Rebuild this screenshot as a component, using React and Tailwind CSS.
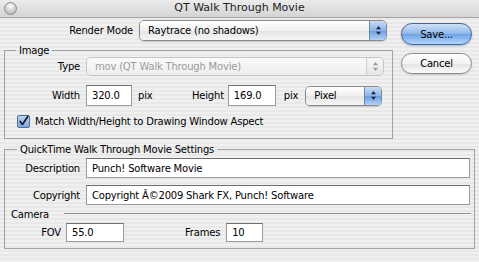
import React from 'react';

const Arrows = ({ disabled }) => (
    <svg width="7" height="11" viewBox="0 0 7 11">
        <path d="M3.5 1 L6 4.2 L1 4.2 Z" fill={disabled ? '#9a9a9a' : '#1c2b44'} />
        <path d="M3.5 10 L6 6.8 L1 6.8 Z" fill={disabled ? '#9a9a9a' : '#1c2b44'} />
    </svg>
);

const Popup = ({ label, className, disabled }) => (
    <div className={`flex items-stretch rounded-[5px] border overflow-hidden ${disabled ? 'border-[#c4c4c4]' : 'border-[#8a8a8a] shadow-[0_1px_1px_rgba(0,0,0,0.15)]'} ${className}`}>
        <div className={`flex-1 flex items-center pl-[8px] ${disabled ? 'bg-[linear-gradient(#fafafa,#eeeeee)] text-[#9c9c9c]' : 'bg-[linear-gradient(#ffffff,#f0f0f0_50%,#e4e4e4_51%,#f6f6f6)] text-black'}`}>
            {label}
        </div>
        <div className={`w-[17px] flex items-center justify-center border-l ${disabled ? 'border-[#d0d0d0] bg-[linear-gradient(#f6f6f6,#e6e6e6)]' : 'border-[#5f86c4] bg-[linear-gradient(#c9dcf6,#8db3ea_50%,#6a9be0_51%,#b6d2f6)]'}`}>
            <Arrows disabled={disabled} />
        </div>
    </div>
);

const Field = ({ value, className }) => (
    <div className={`bg-white border border-[#9a9a9a] border-t-[#6e6e6e] flex items-center pl-[5px] text-black ${className}`}>
        {value}
    </div>
);

export default function App() {
    return (
        <div className="w-[479px] h-[262px] overflow-hidden text-[10px] text-black font-['DejaVu_Sans',sans-serif] bg-[repeating-linear-gradient(180deg,#f0f0f0_0px,#f0f0f0_2px,#e8e8e8_2px,#e8e8e8_4px)]">
            {/* Title bar */}
            <div className="relative h-[18px] flex items-center justify-center border-b border-[#a6a6a6] bg-[linear-gradient(#ececec,#d4d4d4)]">
                <div className="absolute left-[4px] top-[2px] w-[13px] h-[13px] rounded-full border border-[#8c8c8c] bg-[radial-gradient(circle_at_50%_30%,#ffffff,#c9c9c9_60%,#a9a9a9)]" />
                <span className="text-[11px] text-[#202020]">QT Walk Through Movie</span>
            </div>

            <div className="tracking-[-0.2px]">
                <div className="flex">
                    <div className="w-[395px]">
                        {/* Render mode */}
                        <div className="flex items-center mt-[2px] h-[21px]">
                            <div className="w-[134px] text-right pr-[1px]">Render Mode</div>
                            <Popup label="Raytrace (no shadows)" className="ml-[5px] w-[248px] h-[21px]" />
                        </div>

                        {/* Image group */}
                        <fieldset className="ml-[4px] mt-[4px] w-[389px] h-[94px] border border-[#a3a3a3]">
                            <legend className="ml-[11px] px-[3px] leading-[11px]">Image</legend>
                            <div className="flex items-center mt-[1px] h-[19px]">
                                <div className="w-[75px] text-right">Type</div>
                                <Popup label="mov (QT Walk Through Movie)" disabled className="ml-[6px] w-[298px] h-[19px]" />
                            </div>
                            <div className="flex items-center mt-[9px] h-[21px]">
                                <div className="w-[75px] text-right">Width</div>
                                <Field value="320.0" className="ml-[6px] w-[46px] h-[21px]" />
                                <div className="ml-[6px] w-[54px]">pix</div>
                                <div>Height</div>
                                <Field value="169.0" className="ml-[4px] w-[48px] h-[21px]" />
                                <div className="ml-[8px]">pix</div>
                                <Popup label="Pixel" className="ml-[7px] w-[77px] h-[20px]" />
                            </div>
                            <div className="flex items-center mt-[8px] h-[14px] pl-[12px]">
                                <div className="w-[13px] h-[13px] rounded-[2px] border border-[#4f6f9f] bg-[linear-gradient(#bcd2f0,#7fa6dc)] flex items-center justify-center">
                                    <svg width="13" height="13" viewBox="0 0 13 13">
                                        <path d="M2.5 6.5 L5.2 10 L11.5 0.5" fill="none" stroke="#0d1a33" strokeWidth="2" strokeLinecap="round" strokeLinejoin="round" />
                                    </svg>
                                </div>
                                <span className="ml-[5px]">Match Width/Height to Drawing Window Aspect</span>
                            </div>
                        </fieldset>
                    </div>

                    {/* Buttons */}
                    <div className="ml-[6px] flex flex-col">
                        <div className="mt-[5px] w-[71px] h-[22px] rounded-full border border-[#44679f] bg-[linear-gradient(#cfe1f8,#8fb7ec_50%,#6da2e6_51%,#b4d6fb)] flex items-center justify-center shadow-[0_1px_2px_rgba(0,0,0,0.25)]">
                            Save...
                        </div>
                        <div className="mt-[8px] w-[71px] h-[21px] rounded-full border border-[#8a8a8a] bg-[linear-gradient(#ffffff,#f2f2f2_50%,#e4e4e4_51%,#fafafa)] flex items-center justify-center shadow-[0_1px_2px_rgba(0,0,0,0.15)]">
                            Cancel
                        </div>
                    </div>
                </div>

                {/* QuickTime settings */}
                <fieldset className="ml-[4px] mt-[5px] w-[471px] h-[105px] border border-[#a3a3a3]">
                    <legend className="ml-[12px] px-[3px] leading-[11px]">QuickTime Walk Through Movie Settings</legend>
                    <div className="flex items-center mt-[3px] h-[20px]">
                        <div className="w-[75px] text-right">Description</div>
                        <Field value="Punch! Software Movie" className="ml-[6px] w-[384px] h-[20px]" />
                    </div>
                    <div className="flex items-center mt-[7px] h-[20px]">
                        <div className="w-[75px] text-right">Copyright</div>
                        <Field value="Copyright Â©2009 Shark FX, Punch! Software" className="ml-[6px] w-[384px] h-[20px]" />
                    </div>
                    <div className="flex items-center mt-[2px] h-[14px]">
                        <div className="ml-[6px]">Camera</div>
                        <div className="ml-[15px] flex-1 mr-[3px] h-[2px] border-t border-[#8e8e8e] border-b border-b-[#f8f8f8]" />
                    </div>
                    <div className="flex items-center mt-[2px] h-[19px]">
                        <div className="w-[56px] text-right">FOV</div>
                        <Field value="55.0" className="ml-[5px] w-[58px] h-[19px]" />
                        <div className="ml-[61px]">Frames</div>
                        <Field value="10" className="ml-[6px] w-[37px] h-[19px]" />
                    </div>
                </fieldset>
            </div>
        </div>
    );
}
